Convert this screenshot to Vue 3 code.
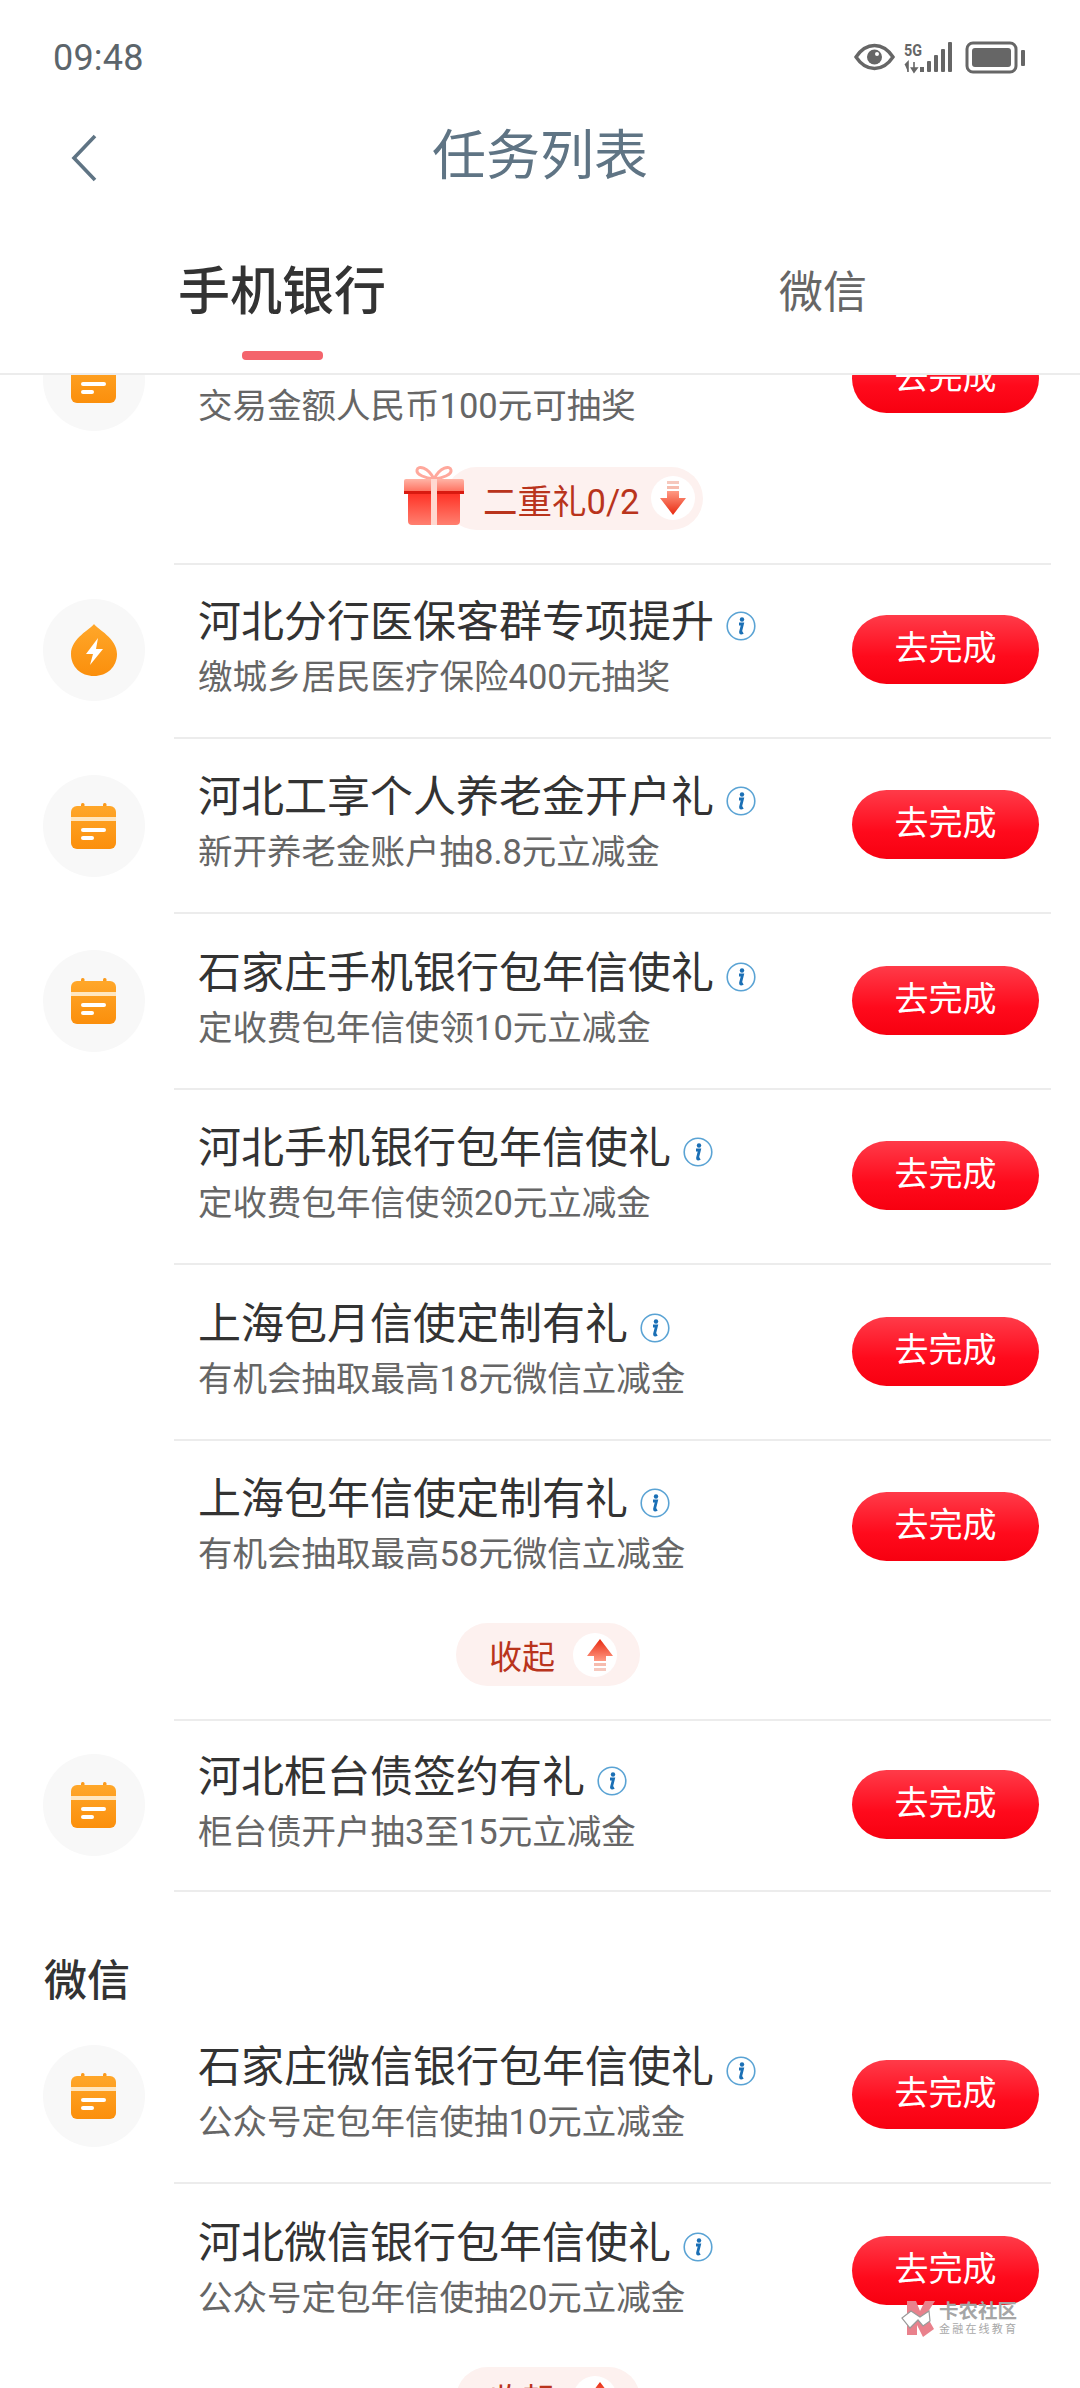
<script setup>
const firstGroup = [
  { sub: '交易金额人民币100元可抽奖', title: '', icon: 'cal', bare: true },
]
const secondGroup = [
  { title: '河北分行医保客群专项提升', sub: '缴城乡居民医疗保险400元抽奖', icon: 'drop' },
  { title: '河北工享个人养老金开户礼', sub: '新开养老金账户抽8.8元立减金', icon: 'cal' },
  { title: '石家庄手机银行包年信使礼', sub: '定收费包年信使领10元立减金', icon: 'cal' },
  { title: '河北手机银行包年信使礼', sub: '定收费包年信使领20元立减金', icon: '' },
  { title: '上海包月信使定制有礼', sub: '有机会抽取最高18元微信立减金', icon: '' },
  { title: '上海包年信使定制有礼', sub: '有机会抽取最高58元微信立减金', icon: '', bare: true },
]
const thirdGroup = [
  { title: '河北柜台债签约有礼', sub: '柜台债开户抽3至15元立减金', icon: 'cal', short: true },
]
const wechatGroup = [
  { title: '石家庄微信银行包年信使礼', sub: '公众号定包年信使抽10元立减金', icon: 'cal' },
  { title: '河北微信银行包年信使礼', sub: '公众号定包年信使抽20元立减金', icon: '', bare: true },
]
const groups = [
  { key: 'a', rows: firstGroup, more: 'gift' },
  { key: 'b', rows: secondGroup, more: 'fold' },
  { key: 'c', rows: thirdGroup, more: '' },
]
</script>

<template>
  <div class="page">
    <div class="status">
      <span class="time">09:48</span>
      <svg class="sys" width="176" height="34" viewBox="0 0 176 34">
        <path d="M2 16 C8 7 14 4.500 20.500 4.500 C27 4.500 33 7 39 16 C33 25 27 27.500 20.500 27.500 C14 27.500 8 25 2 16 Z" fill="none" stroke="#666" stroke-width="3.400"/>
        <circle cx="20.500" cy="16" r="7.500" fill="#666"/>
        <circle cx="23" cy="13" r="2" fill="#fff"/>
        <text x="50" y="15" font-family="Roboto, sans-serif" font-size="16" font-weight="700" fill="#666" textLength="18" lengthAdjust="spacingAndGlyphs">5G</text>
        <path d="M51 24 L54 21 V31 M60 21 V27 M57.500 27 H63 L60 31 Z" fill="#666" stroke="#666" stroke-width="1.600"/>
        <rect x="66" y="26" width="4" height="5" fill="#666"/>
        <rect x="73" y="20" width="4" height="11" rx="1" fill="#666"/>
        <rect x="80" y="14" width="4" height="17" rx="1" fill="#666"/>
        <rect x="87" y="8" width="4" height="23" rx="1" fill="#666"/>
        <rect x="94" y="1" width="4" height="30" rx="1" fill="#666"/>
        <rect x="113" y="2" width="49" height="29" rx="6" fill="none" stroke="#666" stroke-width="3"/>
        <rect x="118" y="7" width="39" height="19" rx="3" fill="#666"/>
        <rect x="167" y="9" width="4" height="16" rx="1" fill="#666"/>
      </svg>
    </div>

    <div class="nav">
      <svg class="back" width="26" height="48" viewBox="0 0 26 48">
        <path d="M24 2 L3 24 L24 46" fill="none" stroke="#5f7484" stroke-width="3.600"/>
      </svg>
      <span class="nav-title">任务列表</span>
    </div>

    <div class="tabs">
      <div class="tab active">
        <span>手机银行</span>
        <i class="tab-bar"></i>
      </div>
      <div class="tab">
        <span>微信</span>
      </div>
    </div>

    <div class="scroll">
      <div class="inner">
        <svg class="defs" width="0" height="0">
          <defs>
            <linearGradient id="og" x1="0" y1="0" x2="0" y2="1">
              <stop offset="0" stop-color="#ffa72a"/>
              <stop offset="1" stop-color="#fb8f0c"/>
            </linearGradient>
          </defs>
        </svg>

        <section v-for="g in groups" :key="g.key" class="group">
          <div v-for="r in g.rows" :key="r.sub" class="row" :class="{ short: r.short }">
            <div class="icon-col">
              <div v-if="r.icon" class="circle">
                <svg v-if="r.icon === 'cal'" width="46" height="46" viewBox="0 0 46 46">
                  <rect x="10" y="0" width="3.500" height="6" rx="1.500" fill="#fb9a1c"/>
                  <rect x="32" y="0" width="3.500" height="6" rx="1.500" fill="#fb9a1c"/>
                  <rect x="0" y="3" width="45" height="43" rx="6" fill="url(#og)"/>
                  <rect x="0" y="14" width="45" height="4" fill="#ffe6bf"/>
                  <rect x="10" y="25" width="25" height="4" rx="2" fill="#fff"/>
                  <rect x="10" y="33" width="13" height="4" rx="2" fill="#fff"/>
                </svg>
                <svg v-else width="46" height="52" viewBox="0 0 46 52">
                  <path d="M23 0 C26 5 46 14 46 30 C46 43 36 52 23 52 C10 52 0 43 0 30 C0 14 20 5 23 0 Z" fill="url(#og)"/>
                  <path d="M27 14 L15 30 H22 L19 41 L32 25 H25 Z" fill="#fff"/>
                </svg>
              </div>
            </div>
            <div class="body" :class="{ bare: r.bare }">
              <div class="texts">
                <div class="title">
                  <span>{{ r.title }}</span>
                  <svg v-if="r.title" class="info" width="30" height="30" viewBox="0 0 30 30">
                    <circle cx="15" cy="15" r="13.800" fill="#fff" stroke="#5aa3d4" stroke-width="1.600"/>
                    <circle cx="16" cy="8.500" r="2.200" fill="#1a6fb5"/>
                    <path d="M13 13 H16.500 L14.500 21 Q14.200 23 17 21.500" fill="none" stroke="#1a6fb5" stroke-width="2.800"/>
                  </svg>
                </div>
                <div class="sub">{{ r.sub }}</div>
              </div>
              <div class="btn">去完成</div>
            </div>
          </div>

          <div v-if="g.more === 'gift'" class="more gift-more">
            <div class="pill gift-pill">
              <svg class="gift" width="60" height="60" viewBox="0 0 60 60">
                <defs>
                  <linearGradient id="gb" x1="0" y1="0" x2="0" y2="1">
                    <stop offset="0" stop-color="#ff2c20"/>
                    <stop offset="1" stop-color="#ff8070"/>
                  </linearGradient>
                  <linearGradient id="gt" x1="0" y1="0" x2="0" y2="1">
                    <stop offset="0" stop-color="#ffb4a6"/>
                    <stop offset="1" stop-color="#ff6a58"/>
                  </linearGradient>
                </defs>
                <path d="M30 14 C24 2 14 0 13 5 C12 10 22 13 30 14 C38 13 48 10 47 5 C46 0 36 2 30 14 Z" fill="none" stroke="#ffa89c" stroke-width="3"/>
                <rect x="4" y="26" width="52" height="34" rx="4" fill="url(#gb)"/>
                <rect x="0" y="14" width="60" height="14" rx="2" fill="url(#gt)"/>
                <rect x="0" y="26" width="60" height="3" fill="#d91a10"/>
                <rect x="27" y="14" width="6" height="46" fill="#ffd8d0"/>
              </svg>
              <span class="pill-text gift-text">二重礼0/2</span>
              <span class="arrow-dot">
                <svg width="26" height="34" viewBox="0 0 26 34">
                  <defs>
                    <linearGradient id="ad" x1="0" y1="0" x2="0" y2="1">
                      <stop offset="0" stop-color="#ff9a84"/>
                      <stop offset="1" stop-color="#e82a10"/>
                    </linearGradient>
                  </defs>
                  <rect x="7" y="0" width="12" height="3" fill="#f6c8bd"/>
                  <rect x="7" y="5" width="12" height="3" fill="#f6bcae"/>
                  <path d="M7 10 H19 V17 H26 L13 34 L0 17 H7 Z" fill="url(#ad)"/>
                </svg>
              </span>
            </div>
          </div>

          <div v-if="g.more === 'fold'" class="more fold-more">
            <div class="pill fold-pill">
              <span class="pill-text">收起</span>
              <span class="arrow-dot up">
                <svg width="26" height="32" viewBox="0 0 26 32">
                  <defs>
                    <linearGradient id="au" x1="0" y1="0" x2="0" y2="1">
                      <stop offset="0" stop-color="#e82a10"/>
                      <stop offset="1" stop-color="#ff9a84"/>
                    </linearGradient>
                  </defs>
                  <path d="M13 0 L26 17 H19 V22 H7 V17 H0 Z" fill="url(#au)"/>
                  <rect x="7" y="24" width="12" height="3" fill="#f6bcae"/>
                  <rect x="7" y="29" width="12" height="3" fill="#f6c8bd"/>
                </svg>
              </span>
            </div>
          </div>
        </section>

        <h2 class="section-head">微信</h2>

        <section class="group">
          <div v-for="r in wechatGroup" :key="r.sub" class="row">
            <div class="icon-col">
              <div v-if="r.icon" class="circle">
                <svg width="46" height="46" viewBox="0 0 46 46">
                  <rect x="10" y="0" width="3.500" height="6" rx="1.500" fill="#fb9a1c"/>
                  <rect x="32" y="0" width="3.500" height="6" rx="1.500" fill="#fb9a1c"/>
                  <rect x="0" y="3" width="45" height="43" rx="6" fill="url(#og)"/>
                  <rect x="0" y="14" width="45" height="4" fill="#ffe6bf"/>
                  <rect x="10" y="25" width="25" height="4" rx="2" fill="#fff"/>
                  <rect x="10" y="33" width="13" height="4" rx="2" fill="#fff"/>
                </svg>
              </div>
            </div>
            <div class="body" :class="{ bare: r.bare }">
              <div class="texts">
                <div class="title">
                  <span>{{ r.title }}</span>
                  <svg class="info" width="30" height="30" viewBox="0 0 30 30">
                    <circle cx="15" cy="15" r="13.800" fill="#fff" stroke="#5aa3d4" stroke-width="1.600"/>
                    <circle cx="16" cy="8.500" r="2.200" fill="#1a6fb5"/>
                    <path d="M13 13 H16.500 L14.500 21 Q14.200 23 17 21.500" fill="none" stroke="#1a6fb5" stroke-width="2.800"/>
                  </svg>
                </div>
                <div class="sub">{{ r.sub }}</div>
              </div>
              <div class="btn">去完成</div>
            </div>
          </div>
          <div class="more last-more">
            <div class="pill fold-pill">
              <span class="pill-text">收起</span>
              <span class="arrow-dot up">
                <svg width="26" height="32" viewBox="0 0 26 32">
                  <path d="M13 0 L26 17 H19 V22 H7 V17 H0 Z" fill="url(#au)"/>
                  <rect x="7" y="24" width="12" height="3" fill="#f6bcae"/>
                  <rect x="7" y="29" width="12" height="3" fill="#f6c8bd"/>
                </svg>
              </span>
            </div>
          </div>
        </section>
      </div>
    </div>

    <div class="mark">
      <svg width="38" height="36" viewBox="0 0 38 36">
        <path d="M6 0 H15 L19 10 L24 0 H34 L25 14 L33 28 L22 36 L16 24 V34 H6 Z" fill="#e9818c"/>
        <path d="M1 17 L10 10 L19 16 L28 10 L29 20 L22 25 L17 19 L9 27 Z" fill="#fff" stroke="#9a9a9a" stroke-width="1.200"/>
      </svg>
      <div class="mark-text">
        <span class="mark-main">卡农社区</span>
        <span class="mark-sub">金融在线教育</span>
      </div>
    </div>
  </div>
</template>

<style>
html, body { margin: 0; background: #fff; }
</style>

<style scoped>
.page {
  position: relative;
  width: 1080px;
  height: 2388px;
  overflow: hidden;
  background: #fff;
  display: flex;
  flex-direction: column;
  font-family: Roboto, "Noto Sans CJK SC", sans-serif;
}
.status {
  height: 118px;
  flex: none;
  display: flex;
  align-items: center;
  justify-content: space-between;
  box-sizing: border-box;
  padding: 0 50px 2px 53px;
}
.time {
  font-size: 36px;
  color: #5c656b;
  letter-spacing: 0.2px;
}
.sys { display: block; }
.nav {
  flex: none;
  height: 78px;
  position: relative;
  display: flex;
  align-items: center;
  justify-content: center;
}
.back {
  position: absolute;
  left: 71px;
  top: 16px;
}
.nav-title {
  font-size: 54px;
  color: #5f7484;
  line-height: 78px;
}
.tabs {
  flex: none;
  height: 179px;
  box-sizing: border-box;
  border-bottom: 2px solid #ececec;
  display: flex;
  padding: 60px 0 0 178px;
  gap: 393px;
  background: #fff;
  position: relative;
  z-index: 1;
}
.tab {
  display: flex;
  flex-direction: column;
  align-items: center;
  font-size: 44px;
  color: #666;
  line-height: 74px;
}
.tab.active {
  font-size: 52px;
  font-weight: 500;
  color: #333;
}
.tab-bar {
  display: block;
  width: 81px;
  height: 9px;
  border-radius: 4px;
  background: #f4646c;
  margin-top: 21px;
}
.scroll {
  flex: 1;
  min-height: 0;
  overflow: hidden;
}
.inner { margin-top: -80.500px; }
.defs { position: absolute; }
.row { display: flex; height: 175.500px; }
.row.short { height: 173px; }
.icon-col {
  width: 174px;
  flex: none;
  box-sizing: border-box;
  padding: 0 0 5px 43px;
  display: flex;
  align-items: center;
}
.circle {
  width: 102px;
  height: 102px;
  border-radius: 50%;
  background: #f8f8f8;
  display: flex;
  align-items: center;
  justify-content: center;
}
.body {
  flex: 1;
  margin: 0 29px 2px 0;
  padding: 0 12px 3.500px 24px;
  box-sizing: border-box;
  border-bottom: 2px solid #ececec;
  display: flex;
  align-items: center;
  justify-content: space-between;
}
.short .body { padding-bottom: 2px; }
.body.bare { border-bottom-color: transparent; }
.texts { margin-top: -3px; }
.title {
  font-size: 43px;
  line-height: 58px;
  color: #333;
  display: flex;
  align-items: center;
  gap: 12px;
  height: 58px;
}
.info { flex: none; margin-top: 8px; }
.sub {
  font-size: 34.500px;
  line-height: 52px;
  color: #666;
}
.btn {
  flex: none;
  width: 187px;
  height: 69px;
  border-radius: 35px;
  background: linear-gradient(#ff3b49, #ff0a1c 60%, #f70010);
  color: #fff;
  font-size: 34px;
  line-height: 67px;
  text-align: center;
}
.more {
  display: flex;
  justify-content: center;
  align-items: flex-start;
  box-sizing: border-box;
  position: relative;
}
.more::after {
  content: "";
  position: absolute;
  left: 174px;
  right: 29px;
  bottom: 0;
  height: 2px;
  background: #ececec;
}
.gift-more { height: 95px; padding-left: 28px; }
.fold-more { height: 103px; padding: 5px 0 0 16px; }
.last-more { height: 100px; padding: 5px 0 0 16px; }
.last-more::after { display: none; }
.pill {
  display: inline-flex;
  align-items: center;
  background: #fdf1ef;
  border-radius: 32px;
  height: 63px;
  position: relative;
}
.gift-pill {
  width: 258px;
  margin: -3px 0 0 40px;
  padding-left: 38px;
  box-sizing: border-box;
}
.gift {
  position: absolute;
  left: -41px;
  top: -2px;
}
.fold-pill {
  width: 184px;
  box-sizing: border-box;
  padding-left: 33px;
}
.pill-text {
  font-size: 33px;
  color: #b9341c;
}
.gift-text { font-size: 34.500px; }
.fold-pill .arrow-dot { margin-left: 18px; }
.gift-pill .arrow-dot { position: absolute; right: 8px; top: 9px; }
.arrow-dot {
  width: 44px;
  height: 44px;
  border-radius: 50%;
  background: #fff;
  display: flex;
  align-items: center;
  justify-content: center;
}
.arrow-dot.up { padding-left: 9px; box-sizing: border-box; }
.section-head {
  margin: 0;
  height: 116.500px;
  box-sizing: border-box;
  padding: 58px 0 0 44px;
  font-size: 43px;
  line-height: 58px;
  font-weight: 500;
  color: #333;
}
.mark {
  position: absolute;
  left: 901px;
  top: 2301px;
  display: flex;
}
.mark-text {
  display: flex;
  flex-direction: column;
}
.mark-main {
  font-size: 19.500px;
  line-height: 22px;
  font-weight: 700;
  color: #a5a5a5;
}
.mark-sub {
  font-size: 11px;
  line-height: 14px;
  letter-spacing: 2.200px;
  color: #a8a8a8;
}
</style>
